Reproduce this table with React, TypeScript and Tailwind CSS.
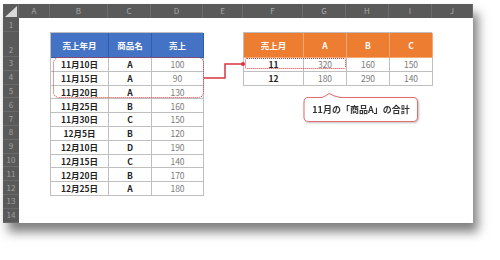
const columns = [
  { label: "A", w: "w-[31px]" },
  { label: "B", w: "w-[58px]" },
  { label: "C", w: "w-[43px]" },
  { label: "D", w: "w-[52px]" },
  { label: "E", w: "w-[40px]" },
  { label: "F", w: "w-[60px]" },
  { label: "G", w: "w-[43px]" },
  { label: "H", w: "w-[43px]" },
  { label: "I", w: "w-[43px]" },
  { label: "J", w: "w-[41px]" },
];

const rowLabels = ["1", "2", "3", "4", "5", "6", "7", "8", "9", "10", "11", "12", "13", "14"];

const sales = [
  ["11月10日", "A", "100"],
  ["11月15日", "A", "90"],
  ["11月20日", "A", "130"],
  ["11月25日", "B", "160"],
  ["11月30日", "C", "150"],
  ["12月5日", "B", "120"],
  ["12月10日", "D", "190"],
  ["12月15日", "C", "140"],
  ["12月20日", "B", "170"],
  ["12月25日", "A", "180"],
];

const totals = [
  ["11", "320", "160", "150"],
  ["12", "180", "290", "140"],
];

const SheetHeader = () => (
  <div className="flex h-[14px] bg-[#5a5a5a]">
    <div className="relative w-[16px] border-r border-[#6c6c6c]">
      <svg className="absolute inset-0" width="16" height="14" viewBox="0 0 16 14">
        <polygon points="14,2 14,13 2,13" fill="#d9d9d9" />
      </svg>
    </div>
    {columns.map((c) => (
      <div
        key={c.label}
        className={`${c.w} flex items-center justify-center border-r border-[#6c6c6c] text-[8px] leading-none text-[#a8a8a8]`}
      >
        {c.label}
      </div>
    ))}
  </div>
);

const RowNumbers = () => (
  <div className="flex w-[16px] flex-col bg-[#5a5a5a]">
    {rowLabels.map((r) => (
      <div
        key={r}
        className={`${r === "2" ? "h-[25px] items-end pb-[2px]" : r === "1" ? "h-[14px] items-center" : "h-[13.8px] items-center"} flex justify-center border-b border-[#6a6a6a] text-[8px] leading-none text-[#a0a0a0]`}
      >
        {r}
      </div>
    ))}
  </div>
);

const SalesTable = () => (
  <div className="grid w-[153px] grid-cols-[58px_43px_52px] border-l border-t border-[#bfbfbf]">
    {["売上年月", "商品名", "売上"].map((h) => (
      <div
        key={h}
        className="flex h-[25px] items-center justify-center border-b border-r border-[#2f5ea8] bg-[#4472c4] text-[8.5px] font-bold text-white"
      >
        {h}
      </div>
    ))}
    {sales.map((row) => (
      <div key={row[0]} className="contents">
        <div className="flex h-[13.8px] items-center justify-center border-b border-r border-[#bfbfbf] text-[8.5px] font-bold leading-none text-[#222]">
          {row[0]}
        </div>
        <div className="flex h-[13.8px] items-center justify-center border-b border-r border-[#bfbfbf] text-[8.5px] font-bold leading-none text-[#222]">
          {row[1]}
        </div>
        <div className="flex h-[13.8px] items-center justify-center border-b border-r border-[#bfbfbf] text-[8.5px] leading-none text-[#7a7a7a]">
          {row[2]}
        </div>
      </div>
    ))}
  </div>
);

const TotalsTable = () => (
  <div className="grid w-[189px] grid-cols-[60px_43px_43px_43px] border-l border-t border-[#bfbfbf]">
    {["売上月", "A", "B", "C"].map((h) => (
      <div
        key={h}
        className="flex h-[25px] items-center justify-center border-b border-r border-[#f4a873] bg-[#ed7d31] text-[8.5px] font-bold text-white"
      >
        {h}
      </div>
    ))}
    {totals.map((row) => (
      <div key={row[0]} className="contents">
        {row.map((v, i) => (
          <div
            key={i}
            className={`flex h-[13.8px] items-center justify-center border-b border-r border-[#bfbfbf] text-[8.5px] leading-none ${i === 0 ? "font-bold text-[#222]" : "text-[#7a7a7a]"}`}
          >
            {v}
          </div>
        ))}
      </div>
    ))}
  </div>
);

export default function App() {
  return (
    <div className="relative h-[260px] w-[500px] overflow-hidden bg-white font-['Noto_Sans_CJK_JP','Noto_Sans',sans-serif]">
      <div className="ml-[3px] mt-[4px] w-[470px] bg-white shadow-[5px_9px_10px_rgba(0,0,0,0.5)]">
        <SheetHeader />
        <div className="flex">
          <RowNumbers />
          <div className="flex flex-1 items-start pl-[31px] pt-[14px]">
            <SalesTable />
            <div className="ml-[40px]">
              <TotalsTable />
            </div>
          </div>
        </div>
      </div>

      {/* highlight boxes */}
      <div className="absolute left-[53px] top-[57px] h-[41px] w-[151px] rounded-[6px] border-[1.5px] border-dotted border-[#d43a42]" />
      <div className="absolute left-[245px] top-[58px] h-[11px] w-[101px] rounded-[2px] border-[1.5px] border-dotted border-[#d43a42]" />

      {/* connector */}
      <svg className="absolute left-0 top-0" width="500" height="260" viewBox="0 0 500 260">
        <polyline points="204,78 225,78 225,64 243,64" fill="none" stroke="#d9363e" strokeWidth="1.5" />
        <circle cx="243" cy="64" r="2" fill="#d9363e" />
      </svg>

      {/* callout */}
      <div className="absolute left-[303px] top-[92px] h-[31px] w-[116px] drop-shadow-[1px_1px_1px_rgba(0,0,0,0.25)]">
        <svg className="absolute inset-0" width="116" height="31" viewBox="0 0 116 31">
          <path
            d="M5.5,5.5 H19 Q23,4 26,1.5 Q30,4 37,5.5 H110 Q114.5,5.5 114.5,10 V25 Q114.5,29.5 110,29.5 H5.5 Q1,29.5 1,25 V10 Q1,5.5 5.5,5.5 Z"
            fill="#fff"
            stroke="#e06a6e"
            strokeWidth="1"
          />
        </svg>
        <div className="absolute inset-x-0 bottom-[1px] top-[5px] flex items-center justify-center text-[9px] font-bold leading-none text-[#333]">
          11月の「商品A」の合計
        </div>
      </div>
    </div>
  );
}
